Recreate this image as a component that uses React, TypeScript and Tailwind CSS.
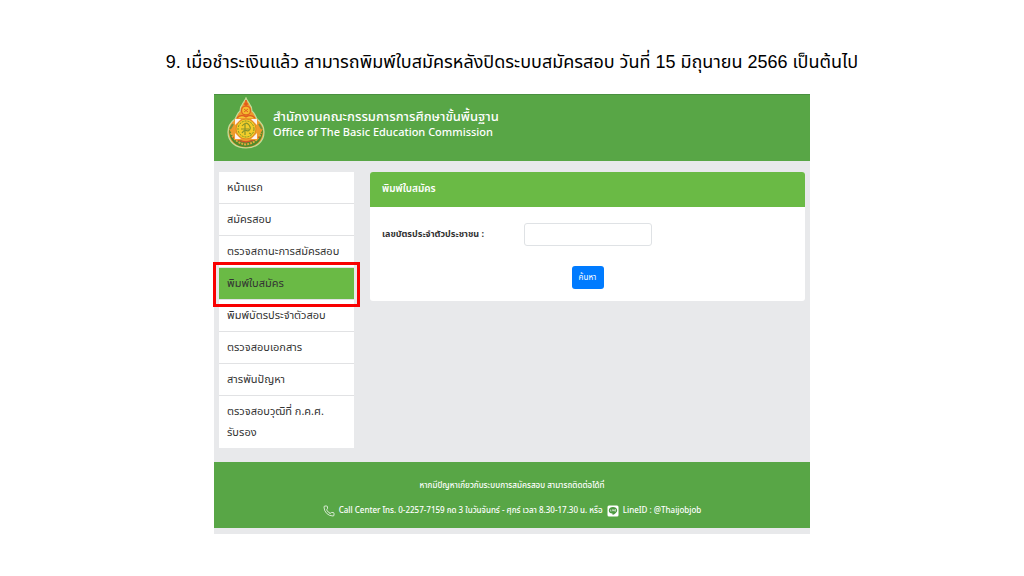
import { Phone } from "lucide-react"

interface MenuItem {
  label: string
  active?: boolean
}

const menuItems: MenuItem[] = [
  { label: "หน้าแรก" },
  { label: "สมัครสอบ" },
  { label: "ตรวจสถานะการสมัครสอบ" },
  { label: "พิมพ์ใบสมัคร", active: true },
  { label: "พิมพ์บัตรประจำตัวสอบ" },
  { label: "ตรวจสอบเอกสาร" },
  { label: "สารพันปัญหา" },
  { label: "ตรวจสอบวุฒิที่ ก.ค.ศ. รับรอง" },
]

function Emblem() {
  return (
    <svg viewBox="0 0 38 52" className="h-[52px] w-[38px] shrink-0" aria-hidden="true">
      <path
        d="M19 1 C20 4 22 5 23 8 C25 10 25 12 25 14 C28 16 28 19 30 22 C34 25 37 29 37 35 C37 45 29 51 19 51 S1 45 1 35 C1 29 4 25 8 22 C10 19 10 16 13 14 C13 12 13 10 15 8 C16 5 18 4 19 1Z"
        fill="#ee9a2c"
        stroke="#c3dc9a"
        strokeWidth="1.2"
      />
      <path d="M2 32 C2 44 9 50 19 50 S36 44 36 32 L31 41 L19 45 L7 41Z" fill="#4f8a2c" />
      <path d="M4 36 Q8 46 19 47.5 Q30 46 34 36" fill="none" stroke="#e5a83a" strokeWidth="2" strokeDasharray="2 1" />
      <path d="M3 32 L6 27 M35 32 L32 27" stroke="#79913a" strokeWidth="2" />
      <path d="M6 40 Q11 44 19 45 Q27 44 32 40" fill="none" stroke="#d4522a" strokeWidth="1.5" />
      <path d="M19 3 V9 M17 7 H21" stroke="#e05a1c" strokeWidth="1.5" />
      <circle cx="19" cy="13.5" r="4.5" fill="#f5bd2f" stroke="#e0641f" strokeWidth="1.3" />
      <path d="M17 12 L21 15 M21 12 L17 15" stroke="#e0641f" strokeWidth="1" />
      <path d="M10 21 Q14 17 19 20 Q24 17 28 21" fill="#f8c636" stroke="#dd5a1e" strokeWidth="1.2" />
      <rect x="7" y="22" width="24" height="21" rx="1" fill="#f09c2b" />
      <path d="M8 22 H14 L8 28Z M30 22 H24 L30 28Z M8 42 H14 L8 36Z M30 42 H24 L30 36Z" fill="#fdf1ee" />
      <circle cx="19" cy="32" r="10" fill="#f3cd2a" stroke="#df8a24" strokeWidth="1" />
      <circle cx="19" cy="32" r="8" fill="none" stroke="#7d9128" strokeWidth="1" strokeDasharray="2 1" />
      <path
        d="M15 29 Q19 24 22 28 Q25 32 21 34 Q17 32 15 36 M14 32 H22 M18 26 V38 M22 36 L24 37"
        fill="none"
        stroke="#85922a"
        strokeWidth="1.2"
      />
    </svg>
  )
}

function LineIcon() {
  return (
    <svg viewBox="0 0 12 12" className="size-3 shrink-0" aria-hidden="true">
      <rect x="0.5" y="0.5" width="11" height="11" rx="1.5" fill="#fff" />
      <path d="M6 2 C3.5 2 1.8 3.5 1.8 5.4 C1.8 7.2 3.2 8.3 5.2 8.6 C5.8 8.8 5.6 9.3 5.5 10 C8 8.8 10.2 7.3 10.2 5.4 C10.2 3.5 8.4 2 6 2Z" fill="#4c9a40" />
      <path d="M3.5 4.5 V6.2 H4.5 M5.3 4.5 V6.2 M6.1 6.2 V4.5 L7.2 6.2 V4.5 M8.9 4.5 H8 V6.2 H8.9 M8 5.3 H8.8" fill="none" stroke="#fff" strokeWidth="0.5" />
    </svg>
  )
}

function SideMenu() {
  return (
    <nav className="w-[135px] shrink-0 text-[11px] leading-[21px] text-[#333]">
      <ul>
        {menuItems.map((item) => (
          <li key={item.label} className="relative border-b border-[#e1e2e4] last:border-b-0">
            <a href="#" className={item.active ? "block bg-[#6aba45] px-2 py-[5px]" : "block bg-white px-2 py-[5px]"}>
              {item.label}
            </a>
            {item.active && (
              <span className="pointer-events-none absolute -inset-x-1.5 -top-1.5 -bottom-2 z-10 border-3 border-[#f80000]" />
            )}
          </li>
        ))}
      </ul>
    </nav>
  )
}

function SearchCard() {
  return (
    <section className="min-w-0 flex-1 overflow-hidden rounded-[3px] bg-white">
      <h2 className="bg-[#6aba45] px-3 py-2 text-[10px] leading-[19px] font-semibold text-white">พิมพ์ใบสมัคร</h2>
      <form className="px-3 pt-4 pb-3" onSubmit={(e) => e.preventDefault()}>
        <div className="flex items-center">
          <label htmlFor="citizen-id" className="w-[142px] text-[9px] font-bold text-[#333]">
            เลขบัตรประจำตัวประชาชน :
          </label>
          <input
            id="citizen-id"
            type="text"
            className="h-[23px] w-32 rounded-[3px] border border-[#dfe2e5] px-2 text-[10px]"
          />
        </div>
        <div className="mt-5 flex justify-center">
          <button type="submit" className="h-[23px] w-8 rounded-[3px] bg-[#007bff] text-[8px] text-white">
            ค้นหา
          </button>
        </div>
      </form>
    </section>
  )
}

export default function App() {
  return (
    <main className="min-h-screen bg-white pt-11 font-['Liberation_Sans','Noto_Sans_Thai',sans-serif]">
      <h1 className="text-center text-[18px] leading-9 text-black">
        9. เมื่อชำระเงินแล้ว สามารถพิมพ์ใบสมัครหลังปิดระบบสมัครสอบ วันที่ 15 มิถุนายน 2566 เป็นต้นไป
      </h1>

      <div className="mx-auto mt-3.5 w-full max-w-[596px] bg-[#e8e9eb] pb-1.5 font-['Noto_Sans_Thai','Noto_Sans',sans-serif]">
        <header className="flex items-start gap-2 border-t border-[#4a9040] bg-[#58a646] px-[13px] pt-0.5 pb-3 text-white">
          <Emblem />
          <div className="pt-3">
            <p className="text-[13px] leading-4 font-medium">สำนักงานคณะกรรมการการศึกษาขั้นพื้นฐาน</p>
            <p className="text-[11px] leading-4 font-medium">Office of The Basic Education Commission</p>
          </div>
        </header>

        <div className="flex items-start gap-4 px-[5px] pt-[11px] pb-[14px]">
          <SideMenu />
          <SearchCard />
        </div>

        <footer className="bg-[#58a646] pt-4 pb-2 text-center text-[8px] font-medium text-white">
          <p className="leading-4">หากมีปัญหาเกี่ยวกับระบบการสมัครสอบ สามารถติดต่อได้ที่</p>
          <p className="mt-2 flex items-center justify-center gap-1 leading-[18px]">
            <Phone className="size-3" strokeWidth={1.5} />
            <span>Call Center โทร. 0-2257-7159 กด 3 ในวันจันทร์ - ศุกร์ เวลา 8.30-17.30 น. หรือ</span>
            <LineIcon />
            <span>LineID : @Thaijobjob</span>
          </p>
        </footer>
      </div>
    </main>
  )
}
